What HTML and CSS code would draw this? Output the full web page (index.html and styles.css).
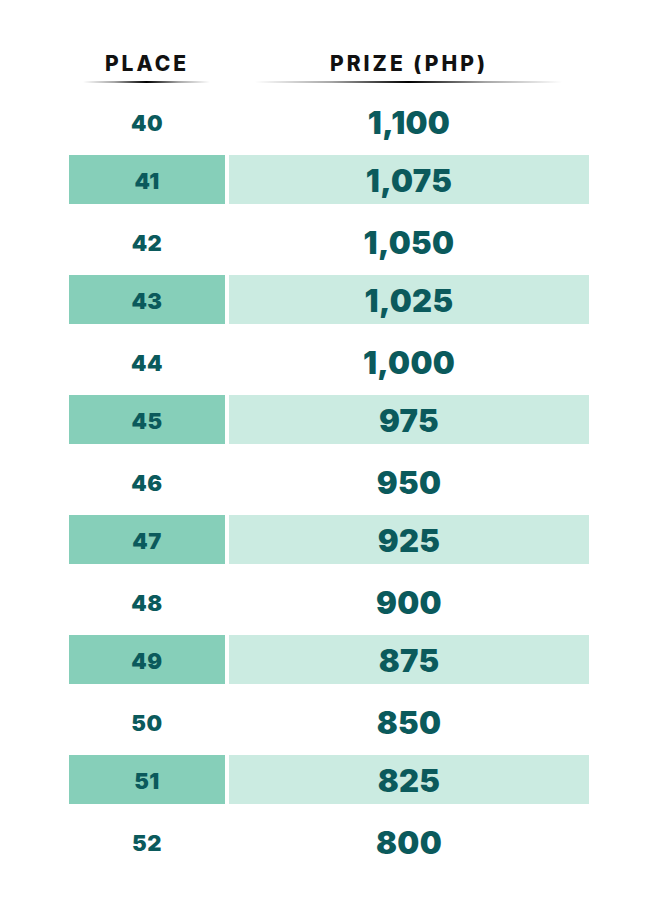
FILE: index.html
```html
<!DOCTYPE html>
<html>
<head>
<meta charset="utf-8">
<link rel="stylesheet" href="styles.css">
</head>
<body>
<div class="page">
  <div class="head">
    <div class="head-cell">
      <div class="head-text">PLACE</div>
      <div class="rule rule-left"></div>
    </div>
    <div class="head-cell">
      <div class="head-text">PRIZE (PHP)</div>
      <div class="rule rule-right"></div>
    </div>
  </div>
  <div class="table">
    <div class="row"><div class="place">40</div><div class="prize">1,100</div></div>
    <div class="row alt"><div class="place">41</div><div class="prize">1,075</div></div>
    <div class="row"><div class="place">42</div><div class="prize">1,050</div></div>
    <div class="row alt"><div class="place">43</div><div class="prize">1,025</div></div>
    <div class="row"><div class="place">44</div><div class="prize">1,000</div></div>
    <div class="row alt"><div class="place">45</div><div class="prize">975</div></div>
    <div class="row"><div class="place">46</div><div class="prize">950</div></div>
    <div class="row alt"><div class="place">47</div><div class="prize">925</div></div>
    <div class="row"><div class="place">48</div><div class="prize">900</div></div>
    <div class="row alt"><div class="place">49</div><div class="prize">875</div></div>
    <div class="row"><div class="place">50</div><div class="prize">850</div></div>
    <div class="row alt"><div class="place">51</div><div class="prize">825</div></div>
    <div class="row"><div class="place">52</div><div class="prize">800</div></div>
  </div>
</div>
</body>
</html>
```
FILE: styles.css
```css
html, body {
  margin: 0;
  padding: 0;
  background: #ffffff;
}
body {
  font-family: Inter, "Open Sans", sans-serif;
}
.page {
  width: 520px;
  margin: 0 auto;
  padding-top: 52px;
}
.head {
  display: grid;
  grid-template-columns: 156px 360px;
  column-gap: 4px;
}
.head-cell {
  display: flex;
  flex-direction: column;
  align-items: stretch;
}
.head-text {
  text-align: center;
  font-weight: 800;
  font-size: 21px;
  line-height: 24px;
  letter-spacing: 3px;
  color: #111111;
}
.rule {
  height: 2px;
  margin-top: 5px;
  background: linear-gradient(to right, rgba(0,0,0,0) 0%, rgba(0,0,0,0.35) 25%, #000 50%, rgba(0,0,0,0.35) 75%, rgba(0,0,0,0) 100%);
}
.rule-left {
  margin-left: 14px;
  margin-right: 15px;
}
.rule-right {
  margin-left: 26px;
  margin-right: 27px;
}
.table {
  margin-top: 12px;
  display: flex;
  flex-direction: column;
  row-gap: 11px;
}
.row {
  display: grid;
  grid-template-columns: 156px 360px;
  column-gap: 4px;
  height: 49px;
}
.place, .prize {
  display: flex;
  align-items: center;
  justify-content: center;
  color: #0b5a5c;
  font-weight: 900;
  box-sizing: border-box;
  padding-top: 6px;
}
.place {
  font-size: 22px;
  letter-spacing: 0.5px;
}
.prize {
  font-size: 31px;
  letter-spacing: 0.3px;
}
.row.alt .place {
  background: #86cfb9;
  padding-top: 2px;
}
.row.alt .prize {
  background: #cbebe1;
  padding-top: 2px;
}
```
